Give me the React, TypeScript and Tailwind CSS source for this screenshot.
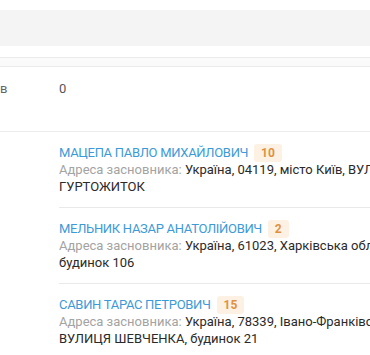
const founders = [
	{
		name: 'МАЦЕПА ПАВЛО МИХАЙЛОВИЧ',
		share: '10',
		line1: 'Україна, 04119, місто Київ, ВУЛИЦЯ ДЕГТЯРІВСЬКА, будинок 27Т,',
		line2: 'ГУРТОЖИТОК',
	},
	{
		name: 'МЕЛЬНИК НАЗАР АНАТОЛІЙОВИЧ',
		share: '2',
		line1: 'Україна, 61023, Харківська обл., місто Харків, ВУЛИЦЯ СУМСЬКА,',
		line2: 'будинок 106',
	},
	{
		name: 'САВИН ТАРАС ПЕТРОВИЧ',
		share: '15',
		line1: 'Україна, 78339, Івано-Франківська обл., Коломийський район, село Грабич,',
		line2: 'ВУЛИЦЯ ШЕВЧЕНКА, будинок 21',
	},
]

export default function App() {
	return (
		<div className="h-[355px] w-[370px] overflow-hidden bg-white text-[13px] leading-[17px] text-[#333]" style={{ fontFamily: 'Roboto, "Liberation Sans", sans-serif' }}>
			<div className="mt-[10px] h-[36px] bg-[#f4f4f4]" />
			<div className="mt-[11px] h-[10px] border-t border-b border-[#ebebeb] bg-[#fafafa]" />

			<div className="flex h-[65px] border-b border-[#ececec] pt-[13px]">
				<div className="w-[59px] text-[#666]">в</div>
				<div className="text-[#555]">0</div>
			</div>

			<div className="pl-[59px]">
				{founders.map((f, i) => (
					<div key={i} className={'w-[600px] py-[12px] ' + (i < founders.length - 1 ? 'border-b border-[#e9e9e9]' : '')}>
						<div className="flex h-[17px] items-center gap-[6px] whitespace-nowrap">
							<span className="tracking-[-0.3px] text-[#3c9ad8]">{f.name}</span>
							<span className="rounded-[3px] bg-[#fdf1e4] px-[7px] text-[12px] font-bold leading-[18px] text-[#e0913f]">{f.share}</span>
						</div>
						<div className="whitespace-nowrap">
							<span className="text-[#a3a3a3]">Адреса засновника: </span>
							<span className="text-[#2a2a2a]">{f.line1}</span>
						</div>
						<div className="whitespace-nowrap text-[#2a2a2a]">{f.line2}</div>
					</div>
				))}
			</div>
		</div>
	)
}
